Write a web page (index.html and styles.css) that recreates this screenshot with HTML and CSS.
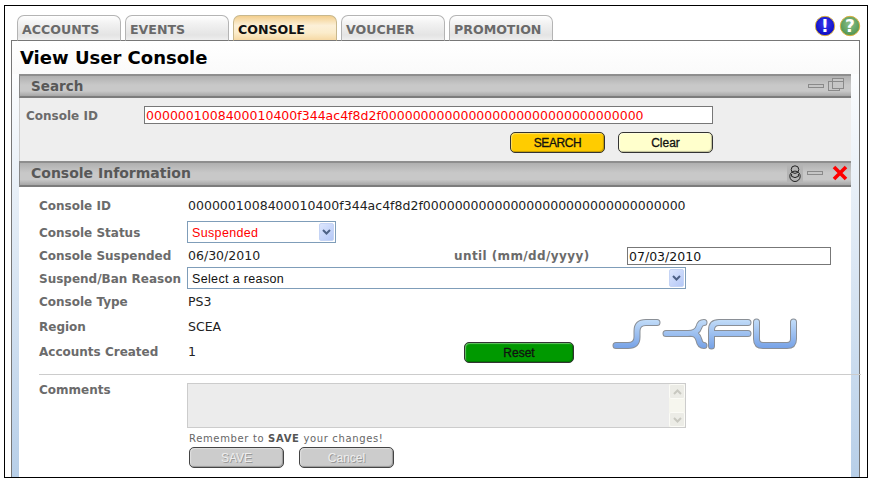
FILE: index.html
```html
<!DOCTYPE html>
<html lang="en">
<head>
<meta charset="utf-8">
<title>View User Console</title>
<link rel="stylesheet" href="styles.css">
</head>
<body>
<div class="frame">
  <nav class="tabbar">
    <a class="tab">ACCOUNTS</a>
    <a class="tab">EVENTS</a>
    <a class="tab active">CONSOLE</a>
    <a class="tab">VOUCHER</a>
    <a class="tab">PROMOTION</a>
    <div class="help">
      <svg class="round" viewBox="0 0 22 22" width="22" height="22">
        <defs>
          <radialGradient id="bl" cx="50%" cy="40%" r="60%"><stop offset="0" stop-color="#3a3af0"/><stop offset="1" stop-color="#0a0ac0"/></radialGradient>
          <radialGradient id="gr" cx="50%" cy="40%" r="60%"><stop offset="0" stop-color="#8cc08c"/><stop offset="1" stop-color="#4f944f"/></radialGradient>
        </defs>
        <circle cx="11" cy="11" r="9.7" fill="url(#bl)" stroke="#d8b040" stroke-width="1"/>
        <text x="11" y="17" class="glyph" text-anchor="middle">!</text>
      </svg>
      <svg class="round" viewBox="0 0 22 22" width="22" height="22">
        <circle cx="11" cy="11" r="9.7" fill="url(#gr)" stroke="#d8b040" stroke-width="1"/>
        <text x="11" y="17" class="glyph" text-anchor="middle">?</text>
      </svg>
    </div>
  </nav>
  <main class="panel">
    <h1 class="title">View User Console</h1>
    <div class="column">
      <section>
        <header class="bar bar-search">
          <h2 class="bar-title">Search</h2>
          <div class="bar-icons">
            <svg width="16" height="14" viewBox="0 0 16 14"><rect x="0.5" y="6.5" width="15" height="3" class="ic"/></svg>
            <svg width="16" height="14" viewBox="0 0 16 14"><rect x="0.5" y="3.5" width="11" height="9" class="ic"/><rect x="4.5" y="0.5" width="11" height="10" class="ic2"/><line x1="4.5" y1="3.5" x2="15.5" y2="3.5" class="ic"/></svg>
          </div>
        </header>
        <div class="search-body">
          <div class="search-row">
            <label class="label search-label">Console ID</label>
            <input class="text-input search-input" type="text" value="0000001008400010400f344ac4f8d2f000000000000000000000000000000000">
          </div>
          <div class="search-actions">
            <button class="btn btn-yellow">SEARCH</button>
            <button class="btn btn-cream">Clear</button>
          </div>
        </div>
      </section>
      <section>
        <header class="bar bar-info">
          <h2 class="bar-title">Console Information</h2>
          <div class="bar-icons">
            <svg width="16" height="17" viewBox="0 0 16 17"><rect width="16" height="17" fill="#b4b4b4"/><circle cx="8" cy="4.6" r="3.8" class="ip"/><circle cx="8" cy="11.3" r="5.2" class="ip"/><path d="M4.6 9v2.4q3.4 2.4 6.8 0V9" class="ip"/></svg>
            <svg width="16" height="14" viewBox="0 0 16 14"><rect x="0.5" y="5.5" width="15" height="3" class="ic"/></svg>
            <svg width="16" height="16" viewBox="0 0 16 16" class="close"><path d="M2 2L14 14M14 2L2 14" stroke="#f00" stroke-width="3.6" fill="none"/></svg>
          </div>
        </header>
        <div class="info-body">
          <div class="row row-id"><span class="label">Console ID</span><span class="value">0000001008400010400f344ac4f8d2f000000000000000000000000000000000</span></div>
          <div class="row row-status">
            <span class="label">Console Status</span>
            <div class="select select-short danger"><span class="select-text">Suspended</span><span class="arrow"><svg width="9" height="6" viewBox="0 0 9 6"><path d="M1 1l3.500 3.500L8 1" fill="none" stroke="#4d6185" stroke-width="2"/></svg></span></div>
          </div>
          <div class="row row-susp">
            <span class="label">Console Suspended</span><span class="value date">06/30/2010</span>
            <span class="label until">until (mm/dd/yyyy)</span>
            <input class="text-input until-input" type="text" value="07/03/2010">
          </div>
          <div class="row row-reason">
            <span class="label">Suspend/Ban Reason</span>
            <div class="select select-long"><span class="select-text">Select a reason</span><span class="arrow"><svg width="9" height="6" viewBox="0 0 9 6"><path d="M1 1l3.500 3.500L8 1" fill="none" stroke="#4d6185" stroke-width="2"/></svg></span></div>
          </div>
          <div class="stats">
            <span class="label">Console Type</span><span class="value stat-value">PS3</span>
            <svg class="logo" width="186" height="34" viewBox="12 11 186 34">
              <defs>
                <linearGradient id="lg" gradientUnits="userSpaceOnUse" x1="0" y1="13" x2="0" y2="43"><stop offset="0" stop-color="#c4def9"/><stop offset="1" stop-color="#74a0e6"/></linearGradient>
                <path id="sx" d="M16 39.500H28Q37 39.500 37 31V25Q37 16.500 46 16.500H57M66 27.500H88Q97 27.500 99 21Q100 16.500 104 16.500M104 39.500Q100 39.500 99 34Q97 27.500 92 27.500M111.500 40V24Q111.500 16.500 119 16.500H148M111.500 27.500H148M156.500 16V33Q156.500 39.500 163 39.500H187Q193.500 39.500 193.500 33V16"/>
              </defs>
              <use href="#sx" fill="none" stroke="#8a8f96" stroke-width="7" stroke-linecap="round"/>
              <use href="#sx" fill="none" stroke="url(#lg)" stroke-width="5" stroke-linecap="round"/>
            </svg>
            <span class="label">Region</span><span class="value stat-value">SCEA</span>
            <span class="label">Accounts Created</span><span class="value stat-value">1</span>
            <button class="btn btn-green reset">Reset</button>
          </div>
          <hr class="rule">
          <div class="comments">
            <span class="label comments-label">Comments</span>
            <div class="comments-field">
              <div class="comment-box">
                <div class="scroll">
                  <span class="sb"><svg width="9" height="6" viewBox="0 0 9 6"><path d="M1 5l3.500-3.500L8 5" fill="none" stroke="#c8c8c0" stroke-width="2"/></svg></span>
                  <span class="sb"><svg width="9" height="6" viewBox="0 0 9 6"><path d="M1 1l3.500 3.500L8 1" fill="none" stroke="#c8c8c0" stroke-width="2"/></svg></span>
                </div>
              </div>
              <p class="remember">Remember to <b>SAVE</b> your changes!</p>
              <div class="save-actions">
                <button class="btn btn-grey">SAVE</button>
                <button class="btn btn-grey">Cancel</button>
              </div>
            </div>
          </div>
        </div>
      </section>
    </div>
  </main>
</div>
</body>
</html>
```
FILE: styles.css
```css
* { box-sizing: border-box; }
html, body { margin: 0; padding: 0; background: #fff; overflow: hidden; }
body { width: 874px; height: 484px; font-family: "DejaVu Sans", sans-serif; }

.frame {
  margin: 5px 0 0 4px;
  width: 864px;
  height: 473px;
  border: 1px solid #000;
  padding-top: 9px;
  overflow: hidden;
  display: flex;
  flex-direction: column;
}

.tabbar { display: flex; flex: none; height: 26px; padding-left: 12px; gap: 4px; margin-bottom: -1px; position: relative; z-index: 1; }
.tab {
  width: 104px;
  height: 26px;
  border: 1px solid #b4b4b4;
  border-bottom-color: #777;
  border-radius: 7px 7px 0 0;
  padding: 6px 0 0 4px;
  background: linear-gradient(#fff, #f2f2f2 30%, #e4e4e4 80%, #efefef);
  font-size: 12.6px;
  line-height: 15px;
  font-weight: 700;
  color: #6a6a6a;
}
.tab.active {
  border-color: #c8b88e;
  border-bottom-color: #777;
  background: linear-gradient(#f3cf8e, #fcf0d8 40%, #fbeccb 70%, #f6d9a4);
  color: #111;
}
.help { margin-left: auto; margin-right: 6px; display: flex; gap: 3px; height: 24px; }
.round { display: block; }
.glyph { font: 700 17px "DejaVu Sans", sans-serif; fill: #fff; }

.panel {
  margin-left: 6px;
  width: 849px;
  height: 445px;
  flex: none;
  border: 1px solid #777;
  padding: 0 8px 0 7px;
  display: flex;
  flex-direction: column;
  background: linear-gradient(#fff 5%, #f6f9fc 14%, #b6cee8 100%);
}
.title {
  flex: none;
  height: 33px;
  margin: 0 -8px 0 -7px;
  padding: 6px 0 0 8px;
  font-size: 18px;
  line-height: 22px;
  font-weight: 700;
  color: #000;
  background: linear-gradient(#fff, #fafafa);
}
.column { background: #fff; flex: 1; }

.bar {
  height: 24px;
  display: flex;
  align-items: center;
  justify-content: space-between;
  padding: 0 7px 2px 11px;
  border-top: 2px solid #8e8e8e;
  border-left: 1px solid #8a8a8a;
  border-bottom: 2px solid #7c7c7c;
  background: linear-gradient(#b0b0b0, #c8c8c8 45%, #c8c8c8 75%, #a6a6a6);
}
.bar-search { padding-bottom: 0; }
.bar-info { height: 26px; padding-right: 3px; }
.bar-title { margin: 0; font-size: 13.5px; font-weight: 700; color: #585858; line-height: 18px; }
.bar-info .bar-title { font-size: 14px; }
.bar-icons { display: flex; align-items: center; gap: 4px; }
.bar-search .bar-icons { margin-bottom: 2px; }
.ic { fill: #c6c6c6; stroke: #8a8a8a; stroke-width: 1; }
.ic2 { fill: #c6c6c6; stroke: #8a8a8a; stroke-width: 1; }
.ip { fill: none; stroke: #222; stroke-width: 1; }
.close { margin-left: 5px; }

.search-body { height: 63px; background: #eee; padding: 8px 0 0 6px; border-left: 1px solid #ccc; }
.search-row { display: flex; align-items: center; height: 18px; }
.search-label { width: 118px; padding-top: 2px; }
.search-input { width: 569px; height: 18px; color: #f00; }
.search-actions { display: flex; gap: 13px; margin: 8px 0 0 484px; }

.label { font-size: 12px; font-weight: 700; color: #6b6b6b; line-height: 16px; white-space: nowrap; }
.value { font-size: 12.52px; color: #222; line-height: 16px; white-space: nowrap; }
.text-input {
  border: 1px solid #777;
  background: #fff;
  padding: 0 1px;
  margin: 0;
  font: 12.52px/16px "DejaVu Sans", sans-serif;
  outline: none;
}

.btn {
  display: block;
  width: 95px;
  height: 21px;
  padding: 0;
  border: 1px solid #333;
  border-radius: 5px;
  font: 12px/18px "Liberation Sans", sans-serif;
  -webkit-text-stroke: 0.3px currentColor;
  color: #111;
  box-shadow: inset -1px -1px 1px rgba(0,0,0,.25), inset 1px 1px 1px rgba(255,255,255,.4);
}
.btn-yellow { background: #fc0; letter-spacing: -0.4px; }
.btn-cream { background: #ffc; }
.btn-green { background: #090; width: 110px; }
.btn-grey { background: #ccc; color: #eee; border-color: #444; text-shadow: 1px 1px 0 #999; -webkit-text-stroke: 0; }

.info-body { padding: 8px 0 0 20px; }
.row { display: flex; align-items: center; }
.row .label, .row .value { padding-top: 2px; }
.row > .label:first-child { width: 149px; flex: none; }
.row-id { height: 20px; }
.row-status { height: 22px; margin-top: 6px; }
.row-susp { height: 22px; margin-top: 1px; }
.row-reason { height: 22px; margin-top: 1px; }

.date { width: 266px; flex: none; }
.until { width: 173px; flex: none; letter-spacing: 0.4px; }
.until-input { width: 204px; height: 18px; margin-top: 2px; color: #111; }

.select {
  display: flex;
  align-items: center;
  height: 22px;
  margin-left: -1px;
  padding: 1px 1px 1px 4px;
  border: 1px solid #7f9db9;
  background: #fff;
  font: 12.5px/18px "Liberation Sans", sans-serif;
  letter-spacing: 0.35px;
  color: #111;
}
.danger { color: #f00; }
.select-short { width: 149px; }
.select-long { width: 499px; }
.select-text { flex: 1; padding-top: 2px; }
.arrow {
  width: 15px;
  height: 18px;
  display: flex;
  align-items: center;
  justify-content: center;
  border: 1px solid #c5d4f5;
  border-radius: 2px;
  background: linear-gradient(135deg, #dce6fd, #b5c8f7);
}

.stats {
  display: grid;
  grid-template-columns: 149px 276px 148px 186px;
  grid-auto-rows: 20px;
  row-gap: 5px;
  margin-top: 2px;
  align-items: center;
}
.stats .label { grid-column: 1; padding-top: 2px; }
.stat-value { grid-column: 2; padding-top: 2px; }
.logo { grid-column: 4; grid-row: 2 / 4; align-self: start; display: block; margin-top: 1px; }
.reset { grid-column: 3; grid-row: 3; align-self: start; margin-top: 1px; }

.rule { width: 822px; height: 1px; margin: 13px 0 0; border: 0; background: #ccc; position: relative; z-index: 1; }

.comments { display: flex; margin-top: 8px; }
.comments-label { width: 148px; flex: none; margin-top: -1px; }
.comments-field { width: 499px; }
.comment-box {
  height: 45px;
  border: 1px solid #ccc;
  background: #ececec;
  display: flex;
  justify-content: flex-end;
}
.scroll { width: 16px; background: #f6f6ee; display: flex; flex-direction: column; justify-content: space-between; }
.sb {
  height: 15px;
  display: flex;
  align-items: center;
  justify-content: center;
  background: #ecece6;
  border: 1px solid #fbfbf6;
  border-radius: 2px;
}
.remember { margin: 4px 0 0 2px; font-size: 10px; line-height: 13px; color: #666; letter-spacing: 0.65px; white-space: nowrap; }
.remember b { color: #555; }
.save-actions { display: flex; gap: 15px; margin: 2px 0 0 2px; }
```
